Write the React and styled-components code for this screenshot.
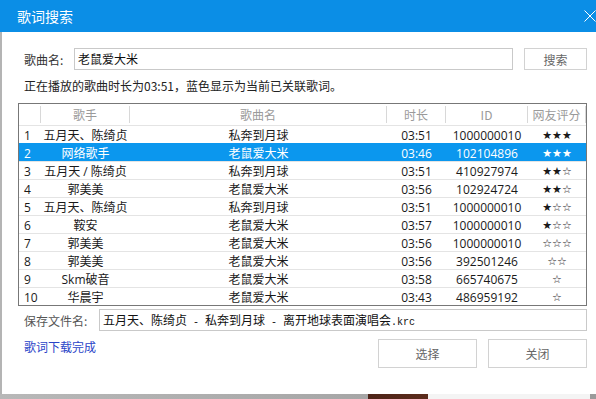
import React from 'react';
import styled, { createGlobalStyle } from 'styled-components';

const GlobalStyle = createGlobalStyle`
  html, body {
    margin: 0;
    padding: 0;
    background: #fff;
  }
  body {
    font-family: "Open Sans", "Noto Sans CJK SC", sans-serif;
    font-size: 12px;
    color: #1a1a1a;
  }
`;

const Window = styled.div`
  width: 596px;
  height: 399px;
  display: flex;
  flex-direction: column;
  overflow: hidden;
`;

const TitleBar = styled.div`
  height: 32px;
  flex: none;
  background: #0b8ee6;
  display: flex;
  align-items: center;
  justify-content: space-between;
  padding-left: 17px;
`;

const Title = styled.span`
  color: #fff;
  font-family: "Noto Sans CJK SC", sans-serif;
  font-size: 14px;
  line-height: 16px;
`;

const CloseIcon = styled.svg`
  width: 12px;
  height: 12px;
  margin-top: -1px;
`;

const Body = styled.div`
  flex: 1;
  background: #fff;
  border-left: 2px solid #b4b4b4;
  padding: 16px 9px 0 16px;
  display: flex;
  flex-direction: column;
`;

const FieldRow = styled.div`
  display: flex;
  align-items: center;
  margin-top: ${p => p.top || 0}px;
  padding-left: 6px;
`;

const Label = styled.span`
  width: ${p => p.width}px;
  flex: none;
  color: ${p => p.color || '#333'};
  font-family: "Noto Sans CJK SC", sans-serif;
  font-size: 12px;
`;

const Field = styled.div`
  flex: 1;
  height: 22px;
  box-sizing: border-box;
  border: 1px solid #c9c9c9;
  padding: 0 3px;
  line-height: 20px;
  font-family: "Noto Sans CJK SC", sans-serif;
  font-size: 12px;
  color: #111;
  white-space: pre;
  overflow: hidden;
`;

const Latin = styled.span`
  font-family: "Liberation Mono", monospace;
  font-size: 10px;
`;

const Button = styled.div`
  width: ${p => p.width}px;
  height: ${p => p.height}px;
  margin-left: ${p => p.gap || 0}px;
  box-sizing: border-box;
  border: 1px solid #d2d2d2;
  background: #fff;
  color: #666;
  display: flex;
  align-items: center;
  justify-content: center;
  font-family: "Noto Sans CJK SC", sans-serif;
  font-size: 12px;
  flex: none;
`;

const Info = styled.div`
  margin-top: 8px;
  padding-left: 6px;
  line-height: 16px;
  font-family: "Noto Sans CJK SC", sans-serif;
  color: #222;
`;

const Table = styled.div`
  margin-top: 9px;
  border: 1px solid #777;
  display: flex;
  flex-direction: column;
`;

const cols = '22px 89px 257px 59px 82px 1fr';

const HeadRow = styled.div`
  display: grid;
  grid-template-columns: ${cols};
  height: 21px;
`;

const HeadCell = styled.div`
  display: flex;
  align-items: center;
  justify-content: center;
  color: #9a9a9a;
  font-family: "Noto Sans CJK SC", sans-serif;
  border-right: 1px solid #d8d8d8;
  margin-top: 2px;
  height: 17px;
`;

const Row = styled.div`
  display: grid;
  grid-template-columns: ${cols};
  height: 18px;
  box-sizing: border-box;
  border-top: 1px solid ${p => (p.selected ? '#0b97ee' : '#e4e4e4')};
  background: ${p => (p.selected ? '#0b97ee' : '#fff')};
  color: ${p => (p.selected ? '#fff' : '#1a1a1a')};
  &:first-of-type {
    border-top-color: transparent;
  }
`;

const Cell = styled.div`
  display: flex;
  align-items: center;
  justify-content: ${p => (p.left ? 'flex-start' : 'center')};
  padding-left: ${p => (p.left ? 5 : 0)}px;
  white-space: nowrap;
  font-family: "Open Sans", "Noto Sans CJK SC", sans-serif;
  font-size: 12px;
`;

const Stars = styled(Cell)`
  font-family: "DejaVu Sans", sans-serif;
  font-size: 11px;
`;

const Footer = styled.div`
  display: flex;
  align-items: flex-start;
  margin-top: 8px;
  padding-left: 6px;
`;

const Status = styled.span`
  flex: 1;
  line-height: 16px;
  color: #2a44c8;
  font-family: "Noto Sans CJK SC", sans-serif;
`;

const Buttons = styled.div`
  display: flex;
`;

const BottomStrip = styled.div`
  height: 5px;
  flex: none;
  background: linear-gradient(
    to right,
    #b8b8b8 0,
    #a6a6a6 368px,
    #4e2418 368px,
    #5c2c1c 428px,
    #f4f4f4 428px,
    #f4f4f4 590px,
    #9a9a9a 590px
  );
`;

const songs = [
  { n: 1, singer: '五月天、陈绮贞', song: '私奔到月球', time: '03:51', id: '1000000010', stars: '★★★' },
  { n: 2, singer: '网络歌手', song: '老鼠爱大米', time: '03:46', id: '102104896', stars: '★★★', selected: true },
  { n: 3, singer: '五月天 / 陈绮贞', song: '私奔到月球', time: '03:51', id: '410927974', stars: '★★☆' },
  { n: 4, singer: '郭美美', song: '老鼠爱大米', time: '03:56', id: '102924724', stars: '★★☆' },
  { n: 5, singer: '五月天、陈绮贞', song: '私奔到月球', time: '03:51', id: '1000000010', stars: '★☆☆' },
  { n: 6, singer: '鞍安', song: '老鼠爱大米', time: '03:57', id: '1000000010', stars: '★☆☆' },
  { n: 7, singer: '郭美美', song: '老鼠爱大米', time: '03:56', id: '1000000010', stars: '☆☆☆' },
  { n: 8, singer: '郭美美', song: '老鼠爱大米', time: '03:56', id: '392501246', stars: '☆☆' },
  { n: 9, singer: 'Skm破音', song: '老鼠爱大米', time: '03:58', id: '665740675', stars: '☆' },
  { n: 10, singer: '华晨宇', song: '老鼠爱大米', time: '03:43', id: '486959192', stars: '☆' },
];

const App = () => {
  return (
    <Window>
      <GlobalStyle />
      <TitleBar>
        <Title>歌词搜索</Title>
        <CloseIcon viewBox="0 0 12 12">
          <path d="M0.5 0.5 L11.5 11.5 M11.5 0.5 L0.5 11.5" stroke="#fff" strokeWidth="1" fill="none" />
        </CloseIcon>
      </TitleBar>
      <Body>
        <FieldRow>
          <Label width={50}>歌曲名:</Label>
          <Field>老鼠爱大米</Field>
          <Button width={63} height={22} gap={11}>搜索</Button>
        </FieldRow>
        <Info>正在播放的歌曲时长为03:51，蓝色显示为当前已关联歌词。</Info>
        <Table>
          <HeadRow>
            <HeadCell />
            <HeadCell>歌手</HeadCell>
            <HeadCell>歌曲名</HeadCell>
            <HeadCell>时长</HeadCell>
            <HeadCell>ID</HeadCell>
            <HeadCell>网友评分</HeadCell>
          </HeadRow>
          {songs.map(s => (
            <Row key={s.n} selected={s.selected}>
              <Cell left>{s.n}</Cell>
              <Cell>{s.singer}</Cell>
              <Cell>{s.song}</Cell>
              <Cell>{s.time}</Cell>
              <Cell>{s.id}</Cell>
              <Stars>{s.stars}</Stars>
            </Row>
          ))}
        </Table>
        <FieldRow top={3}>
          <Label width={75} color="#555">保存文件名:</Label>
          <Field>
            五月天、陈绮贞<Latin> - </Latin>私奔到月球<Latin> - </Latin>离开地球表面演唱会<Latin>.krc</Latin>
          </Field>
        </FieldRow>
        <Footer>
          <Status>歌词下载完成</Status>
          <Buttons>
            <Button width={99} height={29}>选择</Button>
            <Button width={99} height={29} gap={11}>关闭</Button>
          </Buttons>
        </Footer>
      </Body>
      <BottomStrip />
    </Window>
  );
};

export default App;
